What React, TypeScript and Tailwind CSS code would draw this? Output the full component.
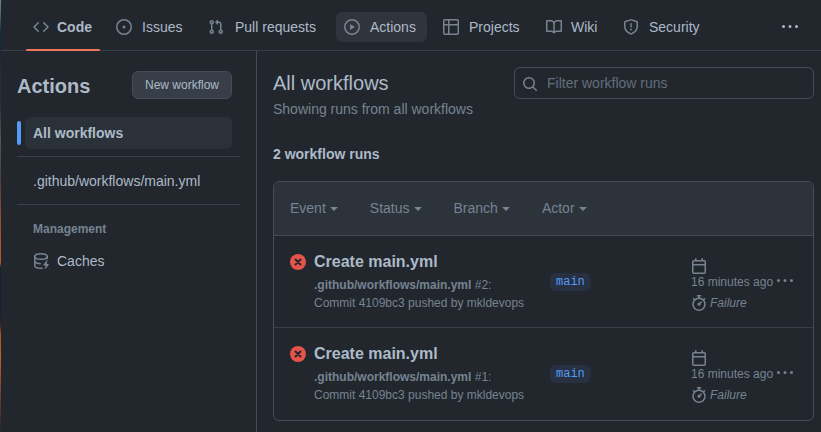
import type { ReactNode } from "react";

const icons = {
  code: "m11.28 3.22 4.25 4.25a.75.75 0 0 1 0 1.06l-4.25 4.25a.749.749 0 0 1-1.275-.326.749.749 0 0 1 .215-.734L13.94 8l-3.72-3.72a.749.749 0 0 1 .326-1.275.749.749 0 0 1 .734.215Zm-6.56 0a.751.751 0 0 1 1.042.018.751.751 0 0 1 .018 1.042L2.06 8l3.72 3.72a.749.749 0 0 1-.326 1.275.749.749 0 0 1-.734-.215L.47 8.53a.75.75 0 0 1 0-1.06Z",
  issue: "M8 9.5a1.5 1.5 0 1 0 0-3 1.5 1.5 0 0 0 0 3ZM8 0a8 8 0 1 1 0 16A8 8 0 0 1 8 0ZM1.5 8a6.5 6.5 0 1 0 13 0 6.5 6.5 0 0 0-13 0Z",
  pull: "M1.5 3.25a2.25 2.25 0 1 1 3 2.122v5.256a2.251 2.251 0 1 1-1.5 0V5.372A2.25 2.25 0 0 1 1.5 3.25Zm5.677-.177L9.573.677A.25.25 0 0 1 10 .854V2.5h1A2.5 2.5 0 0 1 13.5 5v5.628a2.251 2.251 0 1 1-1.5 0V5a1 1 0 0 0-1-1h-1v1.646a.25.25 0 0 1-.427.177L7.177 3.427a.25.25 0 0 1 0-.354ZM3.75 2.5a.75.75 0 1 0 0 1.5.75.75 0 0 0 0-1.5Zm0 9.5a.75.75 0 1 0 0 1.5.75.75 0 0 0 0-1.5Zm8.25.75a.75.75 0 1 0 1.5 0 .75.75 0 0 0-1.5 0Z",
  play: "M8 0a8 8 0 1 1 0 16A8 8 0 0 1 8 0ZM1.5 8a6.5 6.5 0 1 0 13 0 6.5 6.5 0 0 0-13 0Zm4.879-2.773 4.264 2.559a.25.25 0 0 1 0 .428l-4.264 2.559A.25.25 0 0 1 6 10.559V5.442a.25.25 0 0 1 .379-.215Z",
  table: "M0 1.75C0 .784.784 0 1.75 0h12.5C15.216 0 16 .784 16 1.75v12.5A1.75 1.75 0 0 1 14.25 16H1.75A1.75 1.75 0 0 1 0 14.25ZM6.5 6.5v8h7.75a.25.25 0 0 0 .25-.25V6.5Zm8-1.5V1.75a.25.25 0 0 0-.25-.25H6.5V5Zm-13 1.5v7.75c0 .138.112.25.25.25H5v-8ZM5 5V1.5H1.75a.25.25 0 0 0-.25.25V5Z",
  book: "M0 1.75A.75.75 0 0 1 .75 1h4.253c1.227 0 2.317.59 3 1.501A3.743 3.743 0 0 1 11.006 1h4.245a.75.75 0 0 1 .75.75v10.5a.75.75 0 0 1-.75.75h-4.507a2.25 2.25 0 0 0-1.591.659l-.622.621a.75.75 0 0 1-1.06 0l-.622-.621A2.25 2.25 0 0 0 5.258 13H.75a.75.75 0 0 1-.75-.75Zm7.251 10.324.004-5.073-.002-2.253A2.25 2.25 0 0 0 5.003 2.5H1.5v9h3.757a3.75 3.75 0 0 1 1.994.574ZM8.755 4.75l-.004 7.322a3.752 3.752 0 0 1 1.992-.572H14.5v-9h-3.495a2.25 2.25 0 0 0-2.25 2.25Z",
  shield: "M7.467.133a1.748 1.748 0 0 1 1.066 0l5.25 1.68A1.75 1.75 0 0 1 15 3.48V7c0 1.566-.32 3.182-1.303 4.682-.983 1.498-2.585 2.813-5.032 3.855a1.697 1.697 0 0 1-1.33 0c-2.447-1.042-4.049-2.357-5.032-3.855C1.32 10.182 1 8.566 1 7V3.48a1.75 1.75 0 0 1 1.217-1.667Zm.61 1.429a.25.25 0 0 0-.153 0l-5.25 1.68a.25.25 0 0 0-.174.238V7c0 1.358.275 2.666 1.057 3.86.784 1.194 2.121 2.34 4.366 3.297a.196.196 0 0 0 .154 0c2.245-.956 3.582-2.104 4.366-3.298C13.225 9.666 13.5 8.36 13.5 7V3.48a.251.251 0 0 0-.174-.237l-5.25-1.68ZM8.75 4.75v3a.75.75 0 0 1-1.5 0v-3a.75.75 0 0 1 1.5 0ZM9 10.5a1 1 0 1 1-2 0 1 1 0 0 1 2 0Z",
  kebab: "M8 9a1.5 1.5 0 1 0 0-3 1.5 1.5 0 0 0 0 3ZM1.5 9a1.5 1.5 0 1 0 0-3 1.5 1.5 0 0 0 0 3Zm13 0a1.5 1.5 0 1 0 0-3 1.5 1.5 0 0 0 0 3Z",
  search: "M10.68 11.74a6 6 0 0 1-7.922-8.982 6 6 0 0 1 8.982 7.922l3.04 3.04a.749.749 0 0 1-.326 1.275.749.749 0 0 1-.734-.215ZM11.5 7a4.499 4.499 0 1 0-8.997 0A4.499 4.499 0 0 0 11.5 7Z",
  calendar: "M4.75 0a.75.75 0 0 1 .75.75V2h5V.75a.75.75 0 0 1 1.5 0V2h1.25c.966 0 1.75.784 1.75 1.75v10.5A1.75 1.75 0 0 1 13.25 16H2.75A1.75 1.75 0 0 1 1 14.25V3.75C1 2.784 1.784 2 2.75 2H4V.75A.75.75 0 0 1 4.75 0ZM2.5 7.5v6.75c0 .138.112.25.25.25h10.5a.25.25 0 0 0 .25-.25V7.5Zm10.75-4H2.75a.25.25 0 0 0-.25.25V6h11V3.75a.25.25 0 0 0-.25-.25Z",
  stopwatch: "M5.75.75A.75.75 0 0 1 6.5 0h3a.75.75 0 0 1 0 1.5h-.75v1l-.001.041a6.724 6.724 0 0 1 3.464 1.435l.007-.006.75-.75a.749.749 0 0 1 1.275.326.749.749 0 0 1-.215.734l-.75.75-.006.007a6.75 6.75 0 1 1-10.548 0L2.72 5.03l-.75-.75a.751.751 0 0 1 .018-1.042.751.751 0 0 1 1.042-.018l.75.75.007.006A6.72 6.72 0 0 1 7.25 2.541V1.5H6.5a.75.75 0 0 1-.75-.75ZM8 14.5a5.25 5.25 0 1 0-.001-10.501A5.25 5.25 0 0 0 8 14.5Zm.389-6.7 1.33-1.33a.75.75 0 1 1 1.061 1.06L9.45 8.861A1.503 1.503 0 0 1 8 10.75a1.499 1.499 0 1 1 .389-2.95Z",
  bolt: "M14.49 7.582a.375.375 0 0 0-.66-.313l-3.625 4.625a.375.375 0 0 0 .295.606h2.127l-.619 2.922a.375.375 0 0 0 .666.304l3.125-4.125A.375.375 0 0 0 15.5 11h-1.778l.769-3.418Z",
};

function Icon({ name, className = "" }: { name: keyof typeof icons; className?: string }) {
  return (
    <svg viewBox="0 0 16 16" className={`block h-4 w-4 shrink-0 fill-current ${className}`}>
      <path fillRule="evenodd" d={icons[name]} />
    </svg>
  );
}

function FailedIcon() {
  return (
    <svg viewBox="0 0 16 16" className="mt-[18px] block h-4 w-4 shrink-0">
      <circle cx="8" cy="8" r="8" fill="#e5534b" />
      <path d="m5.5 5.5 5 5m0-5-5 5" stroke="#22272e" strokeWidth="1.9" strokeLinecap="round" />
    </svg>
  );
}

function CacheIcon() {
  return (
    <svg viewBox="0 0 16 16" className="block h-4 w-4 shrink-0 text-[#768390]">
      <g fill="none" stroke="currentColor" strokeWidth="1.5" strokeLinecap="round">
        <ellipse cx="8" cy="3.5" rx="6.25" ry="2.75" />
        <path d="M1.75 3.5v9c0 1.5 2.8 2.75 6.25 2.75q.65 0 1.25-.05M1.75 8c0 1.15 2.4 2.55 5.5 2.73M14.25 3.5v2" />
      </g>
      <path fill="currentColor" d={icons.bolt} />
    </svg>
  );
}

function Tab({ icon, className, children }: { icon: keyof typeof icons; className: string; children: ReactNode }) {
  return (
    <a className={`flex h-[30px] shrink-0 items-center rounded-md px-2 whitespace-nowrap ${className}`}>
      <Icon name={icon} className="text-[#768390]" />
      <span>{children}</span>
    </a>
  );
}

function Filter({ children }: { children: ReactNode }) {
  return (
    <span className="flex items-center gap-1">
      {children}
      <span className="mt-[2px] border-x-4 border-t-4 border-x-transparent border-t-[#768390]" />
    </span>
  );
}

function Run({ number, className }: { number: number; className: string }) {
  return (
    <div className={`flex pl-4 text-xs text-[#768390] ${className}`}>
      <FailedIcon />
      <div className="ml-2 w-[236px] pt-[14px]">
        <div className="text-base leading-6 font-bold text-[#adbac7]">Create main.yml</div>
        <div className="mt-[2px] leading-[18px]">
          <b>.github/workflows/main.yml</b> #{number}:
        </div>
        <div className="leading-[18px]">Commit 4109bc3 pushed by mkldevops</div>
      </div>
      <div className="w-[141px] pt-[37px]">
        <span className="inline-block h-[18px] rounded-md bg-[#273142] px-1.5 align-top font-['Liberation_Mono',monospace] text-xs leading-[18px] text-[#539bf5]">
          main
        </span>
      </div>
      <div className="pt-[22px]">
        <Icon name="calendar" />
        <div className="-mt-px flex h-[18px] items-center gap-1 leading-[18px] whitespace-nowrap">
          <span>16 minutes ago</span>
          <Icon name="kebab" className="-mt-[3px]" />
        </div>
        <div className="mt-[3px] flex h-[18px] items-center gap-[3px] italic">
          <Icon name="stopwatch" className="-mt-px" />
          Failure
        </div>
      </div>
    </div>
  );
}

export default function App() {
  return (
    <div className="flex h-[432px] w-[821px] overflow-hidden bg-[#22272e] font-['Liberation_Sans',Arial,sans-serif] text-sm text-[#adbac7]">
      <div className="w-px shrink-0 bg-[linear-gradient(to_bottom,#6b8589_0px,#4c6670_15px,#123047_32px,#0b2940_48px,#30243b_62px,#302a40_105px,#5b5359_140px,#4c3e42_180px,#8b4a34_210px,#c05a24_262px,#142039_268px,#14203a_315px,#3b292b_326px,#b9521e_334px,#c55d2b_360px,#713e34_395px,#29242b_432px)]" />
      <div className="flex min-w-0 flex-1 flex-col">
        <nav className="flex h-[51px] shrink-0 border-b border-[#373e47] pl-6">
          <div className="flex h-[51px] w-[76px] flex-col justify-between">
            <Tab icon="code" className="mt-3 gap-2 font-bold">Code</Tab>
            <div className="mr-px ml-px h-[2px] rounded-xs bg-[#ec775c]" />
          </div>
          <div className="flex flex-1 pt-3">
            <Tab icon="issue" className="ml-[7px] w-[83px] gap-[10px]">Issues</Tab>
            <Tab icon="pull" className="ml-[9px] w-[128px] gap-[11px]">Pull requests</Tab>
            <Tab icon="play" className="ml-2 w-[91px] gap-[10px] bg-[#2f343d]">Actions</Tab>
            <Tab icon="table" className="ml-2 w-[95px] gap-[10px]">Projects</Tab>
            <Tab icon="book" className="ml-2 w-[69px] gap-[9px]">Wiki</Tab>
            <Tab icon="shield" className="ml-2 w-[95px] gap-[10px]">Security</Tab>
          </div>
          <Icon name="kebab" className="mt-[19px] mr-[23px]" />
        </nav>
        <div className="flex min-h-0 flex-1">
          <aside className="w-64 shrink-0 border-r border-[#444c56] pt-5 pr-4 pl-4">
            <div className="flex h-7 items-center justify-between pr-2">
              <h1 className="pt-0.5 text-xl leading-[30px] font-bold">Actions</h1>
              <button className="h-7 w-[100px] rounded-md border border-[#444c56] bg-[#373e47] text-xs">New workflow</button>
            </div>
            <div className="mt-[18px] flex items-center gap-1 pr-2">
              <div className="h-6 w-1 rounded-xs bg-[#539bf5]" />
              <div className="flex h-8 flex-1 items-center rounded-md bg-[#2b3139] pl-2 font-bold">All workflows</div>
            </div>
            <div className="mt-[7px] flex h-[49px] items-center border-y border-[#373e47] pl-4">.github/workflows/main.yml</div>
            <div className="mt-[15px] pl-4 text-xs leading-[18px] font-bold text-[#768390]">Management</div>
            <div className="mt-[13px] flex h-5 items-center gap-2 pl-4">
              <CacheIcon />
              Caches
            </div>
          </aside>
          <main className="flex-1 pt-4 pr-[7px] pl-4">
            <div className="flex justify-between">
              <div>
                <h2 className="text-xl leading-[32px]">All workflows</h2>
                <p className="leading-5 text-[#768390]">Showing runs from all workflows</p>
              </div>
              <div className="flex h-8 w-[300px] items-center gap-[9px] rounded-md border border-[#444c56] pl-[7px] text-[#636e7b]">
                <Icon name="search" className="mt-0.5 text-[#768390]" />
                Filter workflow runs
              </div>
            </div>
            <div className="mt-[25px] leading-5 font-bold">2 workflow runs</div>
            <section className="mt-[17px] h-[240px] overflow-hidden rounded-md border border-[#444c56]">
              <header className="flex h-[54px] items-center gap-8 border-b border-[#444c56] bg-[#2d333b] pb-0.5 pl-4 text-[#768390]">
                <Filter>Event</Filter>
                <Filter>Status</Filter>
                <Filter>Branch</Filter>
                <Filter>Actor</Filter>
              </header>
              <Run number={2} className="h-[92px] border-b border-[#373e47]" />
              <Run number={1} className="h-[92px]" />
            </section>
          </main>
        </div>
      </div>
    </div>
  );
}
